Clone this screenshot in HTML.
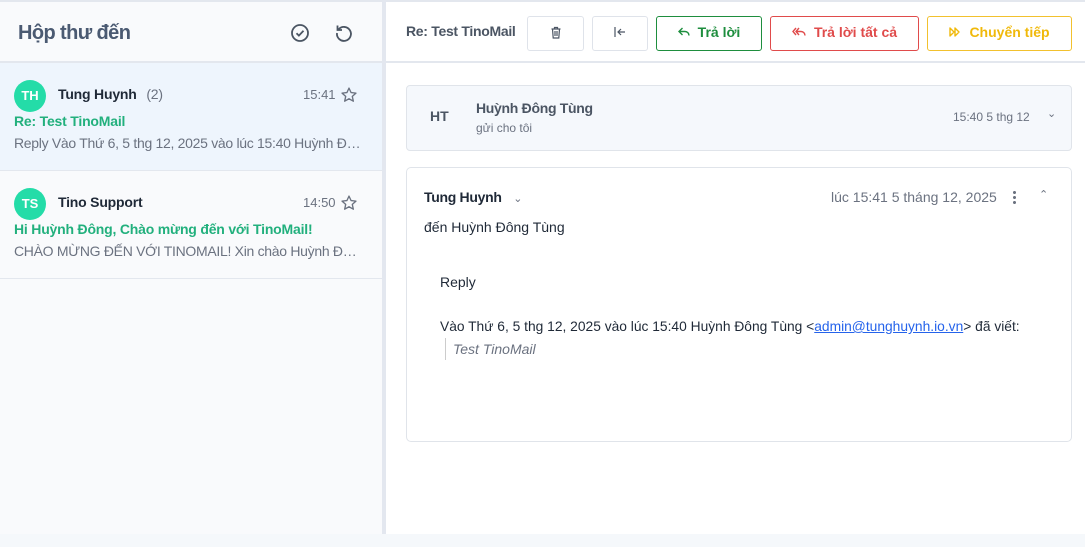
<!DOCTYPE html>
<html><head><meta charset="utf-8"><style>
*{box-sizing:border-box;margin:0;padding:0}
body{width:1085px;height:547px;overflow:hidden;background:#f5f8fb;font-family:"Liberation Sans",Arial,sans-serif;position:relative}
.left{position:absolute;left:0;top:0;width:382px;height:534px;background:#f9fafc;border-top:2px solid #e3e7ee}
.div{position:absolute;left:382px;top:0;width:4px;height:534px;background:#e3e7ef}
.right{position:absolute;left:386px;top:0;width:699px;height:534px;background:#fff;border-top:2px solid #e3e7ee}
.hdr{height:61px;border-bottom:2px solid #e3e7ee;position:relative}
.title{position:absolute;left:18px;top:20px;font-size:20px;font-weight:bold;color:#4b5a72;letter-spacing:-0.6px}
.item{position:absolute;left:0;width:382px;border-bottom:1px solid #e3e7ee}
.av{position:absolute;left:14px;width:32px;height:32px;border-radius:50%;background:#24dca8;color:#fff;font-size:13px;font-weight:bold;text-align:center;line-height:32px}
.nm{position:absolute;left:58px;font-size:14px;font-weight:bold;color:#1f2937;letter-spacing:-0.2px}
.tm{position:absolute;left:303px;font-size:13px;color:#6b7280}
.sub{position:absolute;left:14px;font-size:14px;font-weight:bold;color:#22b07d;letter-spacing:-0.2px}
.pv{position:absolute;left:14px;width:350px;font-size:14px;color:#6b7280;white-space:nowrap;overflow:hidden;text-overflow:ellipsis;letter-spacing:-0.3px}
.star{position:absolute;left:340px}
.btn{position:absolute;top:14px;height:35px;padding-bottom:3px;border:1px solid #dfe3ea;border-radius:3px;font-size:14px;font-weight:bold;display:flex;align-items:center;justify-content:center;gap:8px}
</style></head><body>
<div class="left">
 <div class="hdr">
  <div class="title">Hộp thư đến</div>
  <svg style="position:absolute;left:290px;top:21px" width="20" height="20" viewBox="0 0 20 20"><circle cx="10" cy="10" r="8" fill="none" stroke="#4b5563" stroke-width="1.8"/><path d="M6.5 10.2l2.4 2.4 4.6-4.8" fill="none" stroke="#4b5563" stroke-width="1.8"/></svg>
  <svg style="position:absolute;left:334px;top:21px" width="20" height="20" viewBox="0 0 20 20"><path d="M4.5 6.5A7 7 0 1 1 3 10" fill="none" stroke="#4b5563" stroke-width="1.8"/><path d="M3.5 2.5v4.5h4.5" fill="none" stroke="#4b5563" stroke-width="1.8"/></svg>
 </div>
 <div class="item" style="top:61px;height:108px;background:#eef5fd">
  <div class="av" style="top:17px">TH</div>
  <div class="nm" style="top:23px">Tung Huynh <span style="font-weight:normal;color:#6b7280;margin-left:6px">(2)</span></div>
  <div class="tm" style="top:24px">15:41</div>
  <svg class="star" style="top:23px" width="18" height="18" viewBox="0 0 24 24"><path d="M12 2.8l2.8 6 6.5.7-4.9 4.4 1.4 6.4L12 17l-5.8 3.3 1.4-6.4L2.7 9.5l6.5-.7z" fill="none" stroke="#6b7280" stroke-width="1.8" stroke-linejoin="round"/></svg>
  <div class="sub" style="top:50px">Re: Test TinoMail</div>
  <div class="pv" style="top:72px">Reply Vào Thứ 6, 5 thg 12, 2025 vào lúc 15:40 Huỳnh Đông Tùng</div>
 </div>
 <div class="item" style="top:169px;height:108px">
  <div class="av" style="top:17px">TS</div>
  <div class="nm" style="top:23px">Tino Support</div>
  <div class="tm" style="top:24px">14:50</div>
  <svg class="star" style="top:23px" width="18" height="18" viewBox="0 0 24 24"><path d="M12 2.8l2.8 6 6.5.7-4.9 4.4 1.4 6.4L12 17l-5.8 3.3 1.4-6.4L2.7 9.5l6.5-.7z" fill="none" stroke="#6b7280" stroke-width="1.8" stroke-linejoin="round"/></svg>
  <div class="sub" style="top:50px">Hi Huỳnh Đông, Chào mừng đến với TinoMail!</div>
  <div class="pv" style="top:72px">CHÀO MỪNG ĐẾN VỚI TINOMAIL! Xin chào Huỳnh Đông Tùng</div>
 </div>
</div>
<div class="div"></div>
<div class="right">
 <div class="hdr">
  <div style="position:absolute;left:20px;top:21px;font-size:14px;font-weight:bold;color:#4b5563;letter-spacing:-0.3px">Re: Test TinoMail</div>
  <div class="btn" style="left:141px;width:57px"><svg width="12" height="13" viewBox="0 0 12 13"><path d="M1.5 3h9M4.5 3V1.5h3V3M2.5 3l.7 9h5.6l.7-9M5 5v5M7 5v5" fill="none" stroke="#4b5563" stroke-width="1.2"/></svg></div>
  <div class="btn" style="left:206px;width:56px"><svg width="14" height="12" viewBox="0 0 14 12"><path d="M2 1v10M12 6H5M8 3L5 6l3 3" fill="none" stroke="#4b5563" stroke-width="1.2"/></svg></div>
  <div class="btn" style="left:270px;width:106px;border-color:#1e8e3e;color:#1e8e3e"><svg width="12" height="10" viewBox="0 0 12 10"><path d="M4.5 1L1 4.5 4.5 8M1.5 4.5H7a4 4 0 0 1 4 4" fill="none" stroke="#1e8e3e" stroke-width="1.4"/></svg>Trả lời</div>
  <div class="btn" style="left:384px;width:149px;border-color:#e04b4b;color:#e04b4b"><svg width="14" height="10" viewBox="0 0 14 10"><path d="M4 1L1 4.5 4 8M7 1L4 4.5 7 8M4.5 4.5H9a4 4 0 0 1 4 4" fill="none" stroke="#e04b4b" stroke-width="1.4"/></svg>Trả lời tất cả</div>
  <div class="btn" style="left:541px;width:145px;border-color:#f2c12e;color:#f0b90b"><svg width="12" height="10" viewBox="0 0 12 10"><path d="M1 1l4 4-4 4zM6 1l4 4-4 4z" fill="none" stroke="#f0b90b" stroke-width="1.4" stroke-linejoin="round"/></svg>Chuyển tiếp</div>
 </div>
 <div style="position:absolute;left:20px;top:83px;width:666px;height:66px;border:1px solid #e0e4ea;border-radius:4px;background:#f5f8fc">
  <div style="position:absolute;left:23px;top:22px;font-size:14px;font-weight:bold;color:#4b5563">HT</div>
  <div style="position:absolute;left:69px;top:14px;font-size:14px;font-weight:bold;color:#4b5563;letter-spacing:-0.3px">Huỳnh Đông Tùng</div>
  <div style="position:absolute;left:69px;top:35px;font-size:12px;color:#6b7280">gửi cho tôi</div>
  <div style="position:absolute;left:546px;top:24px;font-size:12px;color:#6b7280">15:40 5 thg 12</div>
  <div style="position:absolute;left:640px;top:21px;font-size:11px;color:#6b7280">⌄</div>
 </div>
 <div style="position:absolute;left:20px;top:165px;width:666px;height:275px;border:1px solid #e0e4ea;border-radius:5px;background:#fff">
  <div style="position:absolute;left:17px;top:21px;font-size:14px;font-weight:bold;color:#1f2937;letter-spacing:-0.3px">Tung Huynh <span style="font-weight:normal;color:#6b7280;font-size:11px;margin-left:8px">⌄</span></div>
  <div style="position:absolute;left:424px;top:21px;font-size:14px;color:#6b7280">lúc 15:41 5 tháng 12, 2025</div>
  <div style="position:absolute;left:606px;top:22px;width:3px;height:14px;background:radial-gradient(circle,#6b7280 1.4px,transparent 1.6px) 0 0/3px 5px repeat-y"></div>
  <div style="position:absolute;left:632px;top:20px;font-size:11px;color:#6b7280">⌃</div>
  <div style="position:absolute;left:17px;top:51px;font-size:14px;color:#1f2937">đến Huỳnh Đông Tùng</div>
  <div style="position:absolute;left:33px;top:106px;font-size:14px;color:#1f2937">Reply</div>
  <div style="position:absolute;left:33px;top:151px;font-size:13.8px;color:#1f2937;white-space:nowrap">Vào Thứ 6, 5 thg 12, 2025 vào lúc 15:40 Huỳnh Đông Tùng &lt;<span style="color:#2563eb;text-decoration:underline">admin@tunghuynh.io.vn</span>&gt; đã viết:</div>
  <div style="position:absolute;left:38px;top:170px;height:22px;border-left:1px solid #ccc;padding-left:7px;font-size:14px;font-style:italic;color:#6b7280;line-height:22px">Test TinoMail</div>
 </div>
</div>
</body></html>
